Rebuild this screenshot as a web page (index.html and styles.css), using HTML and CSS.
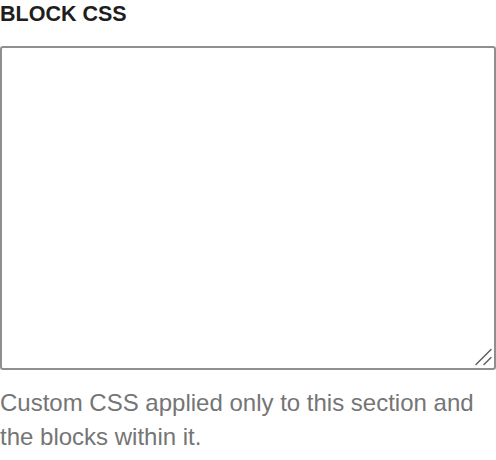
FILE: index.html
```html
<!DOCTYPE html>
<html lang="en">
<head>
<meta charset="utf-8">
<link rel="stylesheet" href="styles.css">
</head>
<body>
<div class="field">
  <label class="label" for="css">BLOCK CSS</label>
  <div class="input-wrap">
    <textarea id="css" class="input"></textarea>
    <svg class="grip" width="20" height="20" viewBox="0 0 20 20" aria-hidden="true">
      <path d="M2 16.5 L17 1.5 M10 16.5 L17 9.5" stroke="#5a5a5a" stroke-width="1.4" stroke-linecap="round" fill="none"/>
    </svg>
  </div>
  <p class="help">Custom CSS applied only to this section and the blocks within it.</p>
</div>
</body>
</html>
```
FILE: styles.css
```css
html, body {
  margin: 0;
  padding: 0;
  background: #fff;
}
.field {
  display: flex;
  flex-direction: column;
  width: 496px;
  font-family: "Liberation Sans", Arial, sans-serif;
}
.label {
  font-size: 21.5px;
  font-weight: 700;
  color: #1e1e1e;
  line-height: 28px;
  margin: 0 0 18px 0;
}
.input-wrap {
  position: relative;
  width: 496px;
  height: 324px;
}
.input {
  display: block;
  box-sizing: border-box;
  width: 496px;
  height: 324px;
  margin: 0;
  border: 2px solid #8f8f8f;
  border-radius: 3px;
  background: #fff;
  resize: none;
  outline: none;
}
.grip {
  position: absolute;
  right: 2px;
  bottom: 2px;
  pointer-events: none;
}
.help {
  margin: 16px 0 0 0;
  font-size: 24px;
  line-height: 34px;
  color: #757575;
}
```
